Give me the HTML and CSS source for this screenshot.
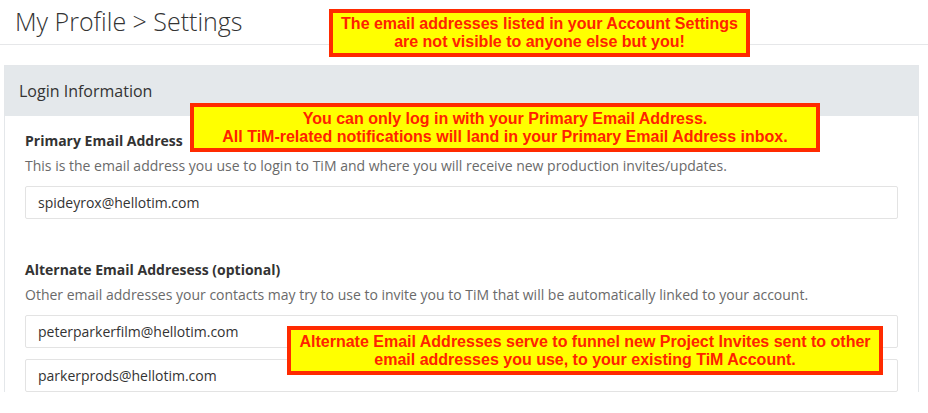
FILE: index.html
```html
<!DOCTYPE html>
<html>
<head>
<meta charset="utf-8">
<link rel="stylesheet" href="styles.css">
</head>
<body>
<div class="page">
  <header class="top">
    <h1 class="title">My Profile &gt; Settings</h1>
  </header>
  <section class="panel">
    <div class="panel-head">Login Information</div>
    <div class="panel-body">
      <div class="group">
        <div class="label">Primary Email Address</div>
        <div class="help">This is the email address you use to login to TiM and where you will receive new production invites/updates.</div>
        <div class="input">spideyrox@hellotim.com</div>
      </div>
      <div class="group alt">
        <div class="label">Alternate Email Addresess (optional)</div>
        <div class="help">Other email addresses your contacts may try to use to invite you to TiM that will be automatically linked to your account.</div>
        <div class="input">peterparkerfilm@hellotim.com</div>
        <div class="input">parkerprods@hellotim.com</div>
      </div>
    </div>
  </section>
  <div class="note note1">The email addresses listed in your Account Settings<br>are not visible to anyone else but you!</div>
  <div class="note note2">You can only log in with your Primary Email Address.<br>All TiM-related notifications will land in your Primary Email Address inbox.</div>
  <div class="note note3">Alternate Email Addresses serve to funnel new Project Invites sent to other<br>email addresses you use, to your existing TiM Account.</div>
</div>
</body>
</html>
```
FILE: styles.css
```css
html, body {
  margin: 0;
  padding: 0;
  background: #fff;
}
body {
  font-family: "Open Sans", "Liberation Sans", sans-serif;
  color: #333;
  width: 928px;
  height: 413px;
  overflow: hidden;
}
.page {
  position: relative;
  height: 413px;
}
.top {
  height: 44px;
  border-bottom: 1px solid #e6e7e9;
  display: flex;
  align-items: center;
  padding-left: 15px;
}
.title {
  margin: 0;
  font-size: 25px;
  font-weight: 300;
  color: #333;
  line-height: 1;
  position: relative;
  top: -1px;
}
.panel {
  margin: 20px 0 0 4px;
  width: 913px;
  border: 1px solid #e4e7ea;
  border-bottom: none;
}
.panel-head {
  height: 50px;
  background: #e4e8eb;
  display: flex;
  align-items: center;
  padding-left: 14px;
  font-size: 16px;
  color: #333;
}
.panel-body {
  padding: 15px 20px 0 20px;
}
.label {
  font-size: 14px;
  font-weight: 700;
  line-height: 20px;
  color: #333;
}
.help {
  font-size: 14px;
  line-height: 20px;
  color: #6a6a6a;
  margin-top: 5px;
}
.input {
  height: 31px;
  border: 1px solid #e3e3e3;
  border-radius: 2px;
  margin-top: 10px;
  display: flex;
  align-items: center;
  padding-left: 12px;
  font-size: 14px;
  color: #333;
}
.group.alt {
  margin-top: 41px;
}
.group.alt .input + .input {
  margin-top: 11px;
}
.note {
  position: absolute;
  box-sizing: border-box;
  background: #ffff00;
  border: 4px solid #ff2a00;
  color: #ff2200;
  font-family: "Liberation Sans", Arial, sans-serif;
  font-weight: 700;
  font-size: 16px;
  line-height: 18px;
  text-align: center;
  display: flex;
  align-items: center;
  justify-content: center;
}
.note1 {
  left: 329px;
  top: 9px;
  width: 421px;
  height: 48px;
}
.note2 {
  left: 190px;
  top: 103px;
  width: 630px;
  height: 49px;
}
.note3 {
  left: 287px;
  top: 326px;
  width: 596px;
  height: 49px;
}
```
